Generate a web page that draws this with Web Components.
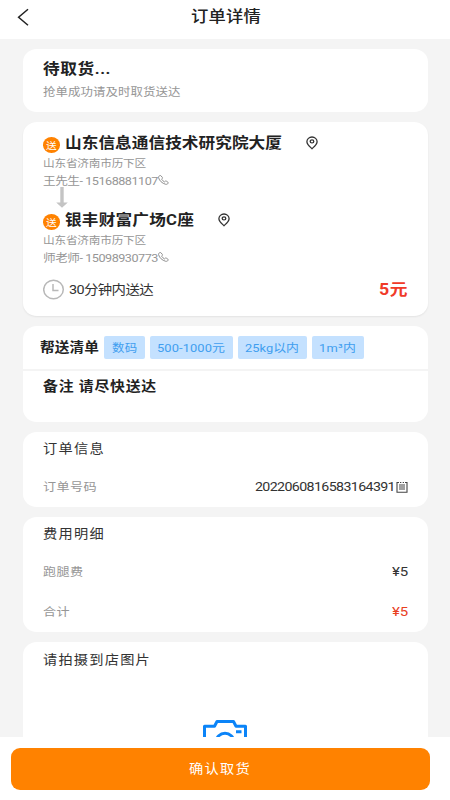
<!DOCTYPE html>
<html lang="zh-CN">
<head>
<meta charset="utf-8">
<title>订单详情</title>
<style>
html,body{margin:0;height:100%}
body{font-family:Roboto,"Noto Sans CJK SC",sans-serif;color:#252525;background:#f4f4f4;overflow:hidden}
</style>
</head>
<body>
<order-page></order-page>
<script>
const define = (name, html, setup) => customElements.define(name, class extends HTMLElement {
  connectedCallback() {
    if (this.shadowRoot) return;
    const t = document.createElement('template');
    t.innerHTML = html;
    this.attachShadow({mode: 'open'}).append(t.content.cloneNode(true));
    if (setup) setup(this, this.shadowRoot);
  }
});

// Wide-set text: fills the width given in "w" by adjusting its tracking.
define('wide-text', `<style>
:host{display:block;flex:none;white-space:pre}
span{display:inline-block;transform:translateY(var(--dy,0)) scaleX(1.11);transform-origin:0 50%}
</style><span><slot></slot></span>`, (el, root) => {
  const w = +el.getAttribute('w'), size = +el.getAttribute('size'), span = root.querySelector('span');
  el.style.fontSize = size + 'px';
  if (size < 12) el.style.setProperty('--dy', '1px');
  const n = [...el.textContent].length;
  const natural = parseFloat(getComputedStyle(span).width) || 0;
  span.style.letterSpacing = ((w / 1.11 - natural) / n) + 'px';
  el.style.width = w + 'px';
});

define('line-row', `<style>
:host{display:flex;align-items:center;box-sizing:border-box;line-height:1}
:host([between]){justify-content:space-between}
</style><slot></slot>`, el => { el.style.height = el.getAttribute('h') + 'px'; });

define('info-card', `<style>
:host{display:block;box-sizing:border-box;flex:none;background:#fff;border-radius:14px/13px;padding:0 20.5px;overflow:hidden}
:host([raised]){box-shadow:0 1px 2px #00000012}
</style><slot></slot>`, el => { el.style.height = el.getAttribute('h') + 'px'; });

define('nav-bar', `<style>
:host{display:grid;grid-template-columns:190.5px 1fr;align-items:center;height:39px;flex:none;background:#fff;box-sizing:border-box;padding-bottom:5px;line-height:1}
svg{margin-left:16px;display:block}
wide-text{--dy:1px;color:#222;font-weight:500}
</style><svg width="14" height="18" viewBox="0 0 14 18" fill="none" stroke="#222" stroke-width="1.5"><path d="M12 1.2 2.6 9.2 12 17.2"/></svg>
<wide-text w="70" size="15.6">订单详情</wide-text>`);

define('send-badge', `<style>
:host{display:flex;flex:none;width:17px;height:15.5px;margin:4px 5px 0 0;border-radius:50%;background:#ff8200;color:#fff;align-items:center;justify-content:center;line-height:1}
</style><wide-text w="10.5" size="9.6">送</wide-text>`);

define('pin-icon', `<style>:host{display:block;flex:none}svg{display:block}</style>
<svg width="12" height="14" viewBox="0 0 12 14" fill="none" stroke="#333" stroke-width="1.3"><path d="M6 12.7C4 10.8.9 8.4.9 5.7a5.1 4.7 0 0 1 10.2 0C11.1 8.4 8 10.8 6 12.7Z"/><ellipse cx="6" cy="5.4" rx="1.8" ry="1.5"/></svg>`);

define('phone-icon', `<style>:host{display:block;flex:none;margin-top:-1px}svg{display:block}</style>
<svg width="11" height="10" viewBox="0 0 11 10" fill="none" stroke="#8e8e8e" stroke-width="1" stroke-linejoin="round"><path d="M1.6.7C.8 1.100.4 1.900.6 2.700c.8 3.100 3.500 5.600 7.100 6.600.9.200 1.900-.200 2.400-1 .3-.5.2-.8-.2-1.100L8.300 6.100c-.4-.2-.7-.2-1 .1l-.8.7C5.200 6.200 4.300 5.300 3.600 4.200l.7-.8c.3-.3.3-.6.1-.9L3.100.9C2.700.4 2.200.4 1.600.7Z"/></svg>`);

define('stop-point', `<style>
:host{display:block}
wide-text{font-weight:700;color:#222}
pin-icon{margin-left:23.500px}
.sub{color:#969696;font-weight:400}
</style>
<line-row h="24"><send-badge></send-badge><wide-text class="name"></wide-text><pin-icon></pin-icon></line-row>
<line-row h="16"><wide-text class="sub" w="103" size="10.5">山东省济南市历下区</wide-text></line-row>
<line-row h="19"><wide-text class="sub contact"></wide-text><phone-icon></phone-icon></line-row>`, (el, root) => {
  // Each text line is created with its content so that it is measured once, when attached.
  const fill = (sel, text, w, size) => {
    const old = root.querySelector(sel), t = document.createElement('wide-text');
    t.className = old.className; t.textContent = text;
    t.setAttribute('w', w); t.setAttribute('size', size);
    old.replaceWith(t);
  };
  fill('.name', el.getAttribute('name'), el.getAttribute('w'), 15);
  fill('.contact', el.getAttribute('contact'), 115, 11.4);
});

define('tag-chip', `<style>
:host{display:flex;flex:none;box-sizing:border-box;height:23.500px;padding:0 7.500px;border-radius:2px;background:#c4e1ff;color:#409eef;align-items:center;line-height:1}
</style><slot></slot>`);

define('submit-bar', `<style>
:host{display:block;flex:none;height:63px;background:#fff;padding:10.500px 20px 0 11px;box-sizing:border-box}
button{display:flex;align-items:center;justify-content:center;width:419px;height:42.500px;border:0;border-radius:9px;background:#ff8200;color:#fff;font:inherit;line-height:1;padding:0 7px 0 0}
</style><button><slot></slot></button>`);

define('order-page', `<style>
:host{display:flex;flex-direction:column;height:800px;width:450px;background:#f4f4f4}
main{flex:1;min-height:0;overflow:hidden;display:flex;flex-direction:column;gap:10px;padding:9.500px 22px 0 22.500px;box-sizing:border-box}
.b{font-weight:700;color:#222}.g{color:#969696}.h{color:#333}
.price{color:#f03a28;font-weight:700}.total{color:#e8401f}
.low{--dy:1px}
.arrow{display:block;margin:-3px 0 0 12.500px}
.tags{display:flex;align-items:center;gap:5px;height:43px;margin-left:-3px;line-height:1}
.rule{height:2px;background:#f4f4f4;margin:0 -20.500px}
svg{display:block;flex:none}
.cam{margin:43px auto 0}
</style>
<nav-bar></nav-bar>
<main>
<info-card h="63.5"><line-row h="9"></line-row>
<line-row h="23"><wide-text class="b" w="68" size="15">待取货...</wide-text></line-row>
<line-row h="22"><wide-text class="g" w="137.5" size="11.2">抢单成功请及时取货送达</wide-text></line-row></info-card>
<info-card h="194" raised><line-row h="9"></line-row>
<stop-point name="山东信息通信技术研究院大厦" w="217" contact="王先生- 15168881107"></stop-point>
<svg class="arrow" width="12" height="21" viewBox="0 0 12 21" fill="#c4c4c4"><path d="M4.300 0H7.700V15.500H11.800L6 20.800.2 15.500H4.300Z"/></svg>
<stop-point name="银丰财富广场C座" w="129" contact="师老师- 15098930773"></stop-point>
<line-row h="44" between><line-row h="44"><svg width="22" height="21" viewBox="0 0 22 21" fill="none" stroke="#b8b8b8" stroke-width="1.500"><ellipse cx="10.500" cy="10.500" rx="9.800" ry="9.300"/><path d="M10 5V11.500H15.500"/></svg><wide-text w="84" size="13" style="margin-left:4px;color:#333">30分钟内送达</wide-text></line-row>
<wide-text class="price low" w="29" size="16">5元</wide-text></line-row></info-card>
<info-card h="96"><div class="tags"><wide-text class="b" w="59" size="13.2">帮送清单</wide-text>
<tag-chip><wide-text w="25.500" size="11.2">数码</wide-text></tag-chip><tag-chip><wide-text w="68" size="11.6">500-1000元</wide-text></tag-chip><tag-chip><wide-text w="54" size="11.6">25kg以内</wide-text></tag-chip><tag-chip><wide-text w="37" size="11.6">1m³内</wide-text></tag-chip></div>
<div class="rule"></div><line-row h="32"><wide-text class="b" w="114" size="13.4">备注 请尽快送达</wide-text></line-row></info-card>
<info-card h="75"><line-row h="35"><wide-text class="h" w="62" size="12.8">订单信息</wide-text></line-row>
<line-row h="40" between><wide-text class="g" w="54" size="11.8">订单号码</wide-text><line-row h="40"><wide-text w="140" size="12.8" style="color:#333;margin-right:1px">2022060816583164391</wide-text>
<svg width="12" height="12" viewBox="0 0 12 12" fill="none" stroke="#444" stroke-width="1.100"><path d="M3 1.500H1V11.200H11V1.500H9M4 1.500H5.300M6.700 1.500H8M3 4H9M3 6H9M3 8H9"/></svg></line-row></line-row></info-card>
<info-card h="115"><line-row h="35"><wide-text class="h" w="62" size="12.8">费用明细</wide-text></line-row>
<line-row h="40" between><wide-text class="g" w="40.500" size="11.8">跑腿费</wide-text><wide-text w="16" size="13.500" style="color:#333">¥5</wide-text></line-row>
<line-row h="40" between><wide-text class="g" w="27" size="11.8">合计</wide-text><wide-text class="total" w="16" size="13.500">¥5</wide-text></line-row></info-card>
<info-card h="150"><line-row h="35"><wide-text class="h low" w="108" size="12.8">请拍摄到店图片</wide-text></line-row>
<svg class="cam" width="44" height="40" viewBox="0 0 44 40" fill="none" stroke="#0b84f8" stroke-width="3"><path d="M1.500 38V6.300H11.500L14 1.500H30.500L33 6.300H42.500V38Z" stroke-linejoin="round"/><circle cx="22" cy="22" r="8.800"/><path d="M33 11.700H38.500"/></svg></info-card>
</main>
<submit-bar><wide-text class="low" w="62" size="12.8">确认取货</wide-text></submit-bar>`);
</script>
</body>
</html>
